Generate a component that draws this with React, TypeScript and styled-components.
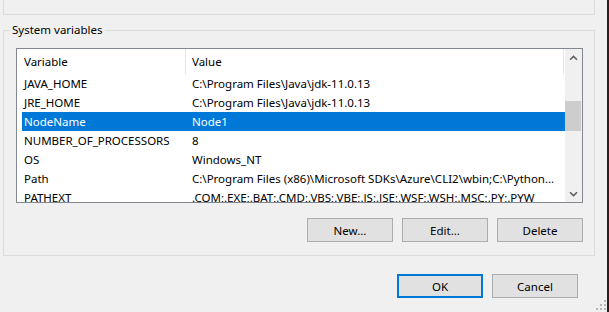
import React from "react";
import styled, { createGlobalStyle } from "styled-components";

const GlobalStyle = createGlobalStyle`
  html, body {
    margin: 0;
    padding: 0;
    background: #f0f0f0;
  }
  body {
    font-family: "Noto Sans", "Open Sans", sans-serif;
    font-size: 11.5px;
    color: #000;
  }
`;

const Window = styled.div`
  position: relative;
  display: flex;
  width: 609px;
  height: 312px;
  overflow: hidden;
  background: #f0f0f0;
`;

const Content = styled.div`
  flex: 1;
  min-width: 0;
  display: flex;
  flex-direction: column;
  padding: 0 12px 0 3px;
`;

const WindowEdge = styled.div`
  width: 2px;
  flex-shrink: 0;
  background: #2e1c1c;
`;

const TopGroup = styled.div`
  height: 14px;
  border: 1px solid #dcdcdc;
  border-top: none;
`;

const Group = styled.div`
  position: relative;
  margin-top: 15px;
  border: 1px solid #dcdcdc;
  padding: 17px 11px 13px 12px;
  display: flex;
  flex-direction: column;
  min-width: 0;
`;

const Caption = styled.span`
  position: absolute;
  top: -9px;
  left: 6px;
  padding: 0 2px;
  line-height: 16px;
  background: #f0f0f0;
`;

const ListBox = styled.div`
  height: 155px;
  box-sizing: border-box;
  border: 1px solid #828790;
  background: #fff;
  display: flex;
  min-width: 0;
`;

const View = styled.div`
  flex: 1;
  display: flex;
  flex-direction: column;
  overflow: hidden;
  min-width: 0;
`;

const Header = styled.div`
  display: flex;
  height: 25px;
  flex-shrink: 0;
`;

const HeaderCell = styled.div<{ $w: number; $pad: number }>`
  box-sizing: border-box;
  width: ${(p) => p.$w}px;
  flex-shrink: 0;
  padding-left: ${(p) => p.$pad}px;
  border-right: 1px solid #e5e5e5;
  display: flex;
  align-items: center;
  white-space: nowrap;
`;

const Row = styled.div<{ $selected?: boolean }>`
  display: flex;
  height: 19px;
  flex-shrink: 0;
  margin-left: 5px;
  align-items: center;
  background: ${(p) => (p.$selected ? "#0078d7" : "transparent")};
  color: ${(p) => (p.$selected ? "#fff" : "#000")};
  white-space: nowrap;
  min-width: 0;
`;

const NameCell = styled.div`
  box-sizing: border-box;
  width: 164px;
  padding-left: 2px;
  flex-shrink: 0;
  overflow: hidden;
`;

const ValueCell = styled.div`
  flex: 1;
  min-width: 0;
  padding-left: 6px;
  overflow: hidden;
  text-overflow: ellipsis;
`;

const ScrollBar = styled.div`
  width: 17px;
  flex-shrink: 0;
  background: #f0f0f0;
  display: flex;
  flex-direction: column;
`;

const ArrowButton = styled.div`
  height: 17px;
  display: flex;
  align-items: center;
  justify-content: center;
  flex-shrink: 0;
`;

const Track = styled.div`
  flex: 1;
  display: flex;
  flex-direction: column;
`;

const Thumb = styled.div`
  height: 30px;
  margin: 0 1px 0 0;
  background: #cdcdcd;
`;

const ButtonRow = styled.div<{ $right?: number; $top: number }>`
  display: flex;
  justify-content: flex-end;
  gap: 9px;
  margin-top: ${(p) => p.$top}px;
  padding-right: ${(p) => p.$right ?? 0}px;
`;

const Button = styled.div<{ $default?: boolean }>`
  box-sizing: border-box;
  width: 86px;
  height: 24px;
  display: flex;
  align-items: center;
  justify-content: center;
  background: #e1e1e1;
  border: ${(p) => (p.$default ? "2px solid #0078d7" : "1px solid #adadad")};
`;

const Grip = styled.svg`
  position: absolute;
  right: 3px;
  bottom: 2px;
`;

const Chevron = ({ down }: { down?: boolean }) => (
  <svg width="9" height="6" viewBox="0 0 9 6">
    <path
      d={down ? "M1 1.2 L4.5 4.6 L8 1.2" : "M1 4.8 L4.5 1.4 L8 4.8"}
      fill="none"
      stroke="#606060"
      strokeWidth="1.6"
    />
  </svg>
);

const rows: [string, string][] = [
  ["JAVA_HOME", "C:\\Program Files\\Java\\jdk-11.0.13"],
  ["JRE_HOME", "C:\\Program Files\\Java\\jdk-11.0.13"],
  ["NodeName", "Node1"],
  ["NUMBER_OF_PROCESSORS", "8"],
  ["OS", "Windows_NT"],
  ["Path", "C:\\Program Files (x86)\\Microsoft SDKs\\Azure\\CLI2\\wbin;C:\\Python..."],
  ["PATHEXT", ".COM;.EXE;.BAT;.CMD;.VBS;.VBE;.JS;.JSE;.WSF;.WSH;.MSC;.PY;.PYW"],
];

export default function App() {
  const scrollOffset = 35;
  return (
    <>
      <GlobalStyle />
      <Window>
        <Content>
          <TopGroup />
          <Group>
            <Caption>System variables</Caption>
            <ListBox>
              <View>
                <Header>
                  <HeaderCell $w={169} $pad={7}>Variable</HeaderCell>
                  <HeaderCell $w={378} $pad={6}>Value</HeaderCell>
                </Header>
                {rows.map(([name, value]) => (
                  <Row key={name} $selected={name === "NodeName"}>
                    <NameCell>{name}</NameCell>
                    <ValueCell>{value}</ValueCell>
                  </Row>
                ))}
              </View>
              <ScrollBar>
                <ArrowButton>
                  <Chevron />
                </ArrowButton>
                <Track>
                  <Thumb style={{ marginTop: scrollOffset }} />
                </Track>
                <ArrowButton>
                  <Chevron down />
                </ArrowButton>
              </ScrollBar>
            </ListBox>
            <ButtonRow $top={15}>
              <Button>New...</Button>
              <Button>Edit...</Button>
              <Button>Delete</Button>
            </ButtonRow>
          </Group>
          <ButtonRow $top={18} $right={17}>
            <Button $default>OK</Button>
            <Button>Cancel</Button>
          </ButtonRow>
        </Content>
        <WindowEdge />
        <Grip width="10" height="10" viewBox="0 0 10 10">
          <rect x="8" y="0" width="2" height="2" fill="#b8b8b8" />
          <rect x="4" y="4" width="2" height="2" fill="#b8b8b8" />
          <rect x="8" y="4" width="2" height="2" fill="#b8b8b8" />
          <rect x="0" y="8" width="2" height="2" fill="#b8b8b8" />
          <rect x="4" y="8" width="2" height="2" fill="#b8b8b8" />
          <rect x="8" y="8" width="2" height="2" fill="#b8b8b8" />
        </Grip>
      </Window>
    </>
  );
}
